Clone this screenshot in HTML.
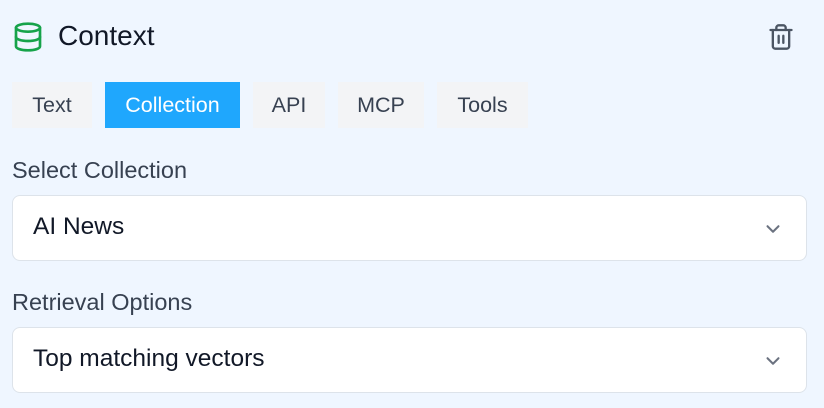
<!DOCTYPE html>
<html><head><style>
body{margin:0;width:824px;height:408px;background:#eff6ff;font-family:"Liberation Sans",sans-serif;position:relative;overflow:hidden}
.a{position:absolute}
.tab{position:absolute;top:82px;height:46px;background:#f3f4f6;color:#374151;font-size:21.5px;line-height:46px;text-align:center}
.lbl{position:absolute;left:12px;font-size:23.5px;color:#374151}
.sel{position:absolute;left:12px;width:795px;height:66px;background:#fff;border:1px solid #dde3ea;border-radius:8px;box-sizing:border-box}
.sel span{position:absolute;left:20px;top:17px;font-size:24.5px;color:#111827}
.sel svg{position:absolute;right:22px;top:22px}
</style></head><body>
<svg class="a" style="left:12px;top:21px" width="32" height="32" viewBox="0 0 24 24" fill="none" stroke="#16a34a" stroke-width="2" stroke-linecap="round"><ellipse cx="12" cy="5" rx="9" ry="3"/><path d="M3 5v14c0 1.7 4 3 9 3s9-1.3 9-3V5"/><path d="M3 12c0 1.7 4 3 9 3s9-1.3 9-3"/></svg>
<div class="a" style="left:58px;top:20px;font-size:28px;color:#111827">Context</div>
<svg class="a" style="left:767px;top:23px" width="28" height="28" viewBox="0 0 24 24" fill="none" stroke="#4b5563" stroke-width="2" stroke-linecap="round" stroke-linejoin="round"><path d="M3 6h18"/><path d="M19 6v14a2 2 0 0 1-2 2H7a2 2 0 0 1-2-2V6"/><path d="M8 6V4a2 2 0 0 1 2-2h4a2 2 0 0 1 2 2v2"/><path d="M10 11v6M14 11v6"/></svg>
<div class="tab" style="left:12px;width:80px">Text</div>
<div class="tab" style="left:105px;width:135px;background:#1fa7fd;color:#fff">Collection</div>
<div class="tab" style="left:253px;width:72px">API</div>
<div class="tab" style="left:338px;width:86px">MCP</div>
<div class="tab" style="left:437px;width:91px">Tools</div>
<div class="lbl" style="top:157px">Select Collection</div>
<div class="sel" style="top:195px"><span>AI News</span><svg width="22" height="22" viewBox="0 0 24 24" fill="none" stroke="#6b7280" stroke-width="2.2" stroke-linecap="round" stroke-linejoin="round"><path d="M6 9l6 6 6-6"/></svg></div>
<div class="lbl" style="top:289px">Retrieval Options</div>
<div class="sel" style="top:327px"><span>Top matching vectors</span><svg width="22" height="22" viewBox="0 0 24 24" fill="none" stroke="#6b7280" stroke-width="2.2" stroke-linecap="round" stroke-linejoin="round"><path d="M6 9l6 6 6-6"/></svg></div>
</body></html>
